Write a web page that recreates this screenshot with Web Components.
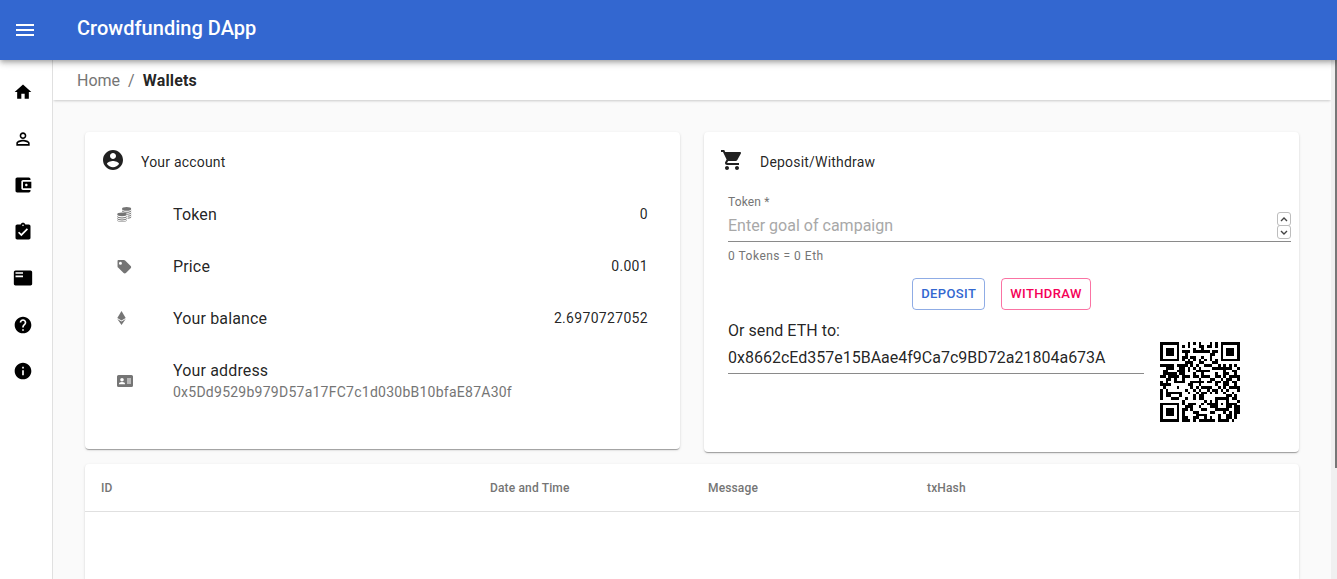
<!DOCTYPE html>
<html lang="en">
<head>
<meta charset="utf-8">
<title>Crowdfunding DApp</title>
<style>
html,body{margin:0;padding:0;height:100%;overflow:hidden;background:#fafafa;font-family:Roboto,"Liberation Sans",sans-serif;color:rgba(0,0,0,.87)}
</style>
</head>
<body>
<cd-app>
  <cd-appbar slot="bar">Crowdfunding DApp</cd-appbar>
  <cd-sidebar slot="side"></cd-sidebar>
  <cd-breadcrumb slot="crumb" home="Home" current="Wallets"></cd-breadcrumb>
  <cd-cards>
    <cd-card slot="left" icon="account" title="Your account" h="317">
      <cd-row icon="coins" label="Token" value="0"></cd-row>
      <cd-row icon="tag" label="Price" value="0.001"></cd-row>
      <cd-row icon="eth" label="Your balance" value="2.6970727052"></cd-row>
      <cd-row icon="idcard" label="Your address" sub="0x5Dd9529b979D57a17FC7c1d030bB10bfaE87A30f"></cd-row>
    </cd-card>
    <cd-card slot="right" icon="cart" title="Deposit/Withdraw" h="320">
      <cd-exchange address="0x8662cEd357e15BAae4f9Ca7c9BD72a21804a673A"></cd-exchange>
    </cd-card>
  </cd-cards>
  <cd-table></cd-table>
</cd-app>
<script>
const ICONS={
menu:'<path d="M3 18h18v-2H3v2zm0-5h18v-2H3v2zm0-7v2h18V6H3z"/>',
home:'<path d="M10 20v-6h4v6h5v-8h3L12 3 2 12h3v8z"/>',
person:'<path d="M12 5.9c1.16 0 2.1.94 2.1 2.1s-.94 2.1-2.1 2.1S9.9 9.16 9.9 8s.94-2.1 2.1-2.1m0 9c2.97 0 6.1 1.46 6.1 2.1v1.1H5.9V17c0-.64 3.13-2.1 6.1-2.1M12 4C9.79 4 8 5.79 8 8s1.79 4 4 4 4-1.79 4-4-1.79-4-4-4zm0 9c-2.67 0-8 1.34-8 4v3h16v-3c0-2.66-5.33-4-8-4z"/>',
wallet:'<path d="M21 18v1c0 1.1-.9 2-2 2H5c-1.11 0-2-.9-2-2V5c0-1.1.89-2 2-2h14c1.1 0 2 .9 2 2v1h-9c-1.11 0-2 .9-2 2v8c0 1.1.89 2 2 2h9zm-9-2h10V8H12v8zm4-2.5c-.83 0-1.5-.67-1.5-1.5s.67-1.5 1.5-1.5 1.5.67 1.5 1.5-.67 1.5-1.5 1.5z"/>',
assign:'<path d="M19 3h-4.18C14.4 1.84 13.3 1 12 1c-1.3 0-2.4.84-2.82 2H5c-1.1 0-2 .9-2 2v14c0 1.1.9 2 2 2h14c1.1 0 2-.9 2-2V5c0-1.1-.9-2-2-2zm-7 0c.55 0 1 .45 1 1s-.45 1-1 1-1-.45-1-1 .45-1 1-1zm-2 14l-4-4 1.41-1.41L10 14.17l6.59-6.59L18 9l-8 8z"/>',
list:'<path d="M21 3H3c-1.1 0-2 .9-2 2v14c0 1.1.9 2 2 2h18c1.1 0 2-.9 2-2V5c0-1.1-.9-2-2-2zm-9 8H3V9h9v2zm0-4H3V5h9v2z"/>',
help:'<path d="M12 2C6.48 2 2 6.48 2 12s4.48 10 10 10 10-4.48 10-10S17.52 2 12 2zm1 17h-2v-2h2v2zm2.07-7.75l-.9.92C13.45 12.9 13 13.5 13 15h-2v-.5c0-1.1.45-2.1 1.17-2.83l1.24-1.26c.37-.36.59-.86.59-1.41 0-1.1-.9-2-2-2s-2 .9-2 2H8c0-2.21 1.79-4 4-4s4 1.79 4 4c0 .88-.36 1.68-.93 2.25z"/>',
info:'<path d="M12 2C6.48 2 2 6.48 2 12s4.48 10 10 10 10-4.48 10-10S17.52 2 12 2zm1 15h-2v-6h2v6zm0-8h-2V7h2v2z"/>',
account:'<path d="M12 2C6.48 2 2 6.48 2 12s4.48 10 10 10 10-4.48 10-10S17.52 2 12 2zm0 3c1.66 0 3 1.34 3 3s-1.34 3-3 3-3-1.34-3-3 1.34-3 3-3zm0 14.2c-2.5 0-4.71-1.28-6-3.22.03-1.99 4-3.08 6-3.08 1.99 0 5.97 1.09 6 3.08-1.29 1.94-3.5 3.22-6 3.22z"/>',
cart:'<path d="M7 18c-1.1 0-1.99.9-1.99 2S5.9 22 7 22s2-.9 2-2-.9-2-2-2zM1 2v2h2l3.6 7.59-1.35 2.45c-.16.28-.25.61-.25.96 0 1.1.9 2 2 2h12v-2H7.42c-.14 0-.25-.11-.25-.25l.03-.12.9-1.63h7.45c.75 0 1.41-.41 1.75-1.03l3.58-6.49c.08-.14.12-.31.12-.48 0-.55-.45-1-1-1H5.21l-.94-2H1zm16 16c-1.1 0-1.99.9-1.99 2s.89 2 1.99 2 2-.9 2-2-.9-2-2-2z"/>',
coins:'<ellipse cx="5" cy="7.3" rx="4.8" ry="1.9"/><path d="M.2 8.4c0 1.1 2.1 2 4.8 2s4.8-.9 4.8-2v1c0 1.1-2.1 2-4.8 2s-4.8-.9-4.8-2z"/><path d="M.2 10.5c0 1.1 2.1 2 4.8 2s4.8-.9 4.8-2v1c0 1.1-2.1 2-4.8 2s-4.8-.9-4.8-2z"/><path d="M.2 12.6c0 1.1 2.1 2 4.8 2s4.8-.9 4.8-2v.6c0 .9-2.1 1.7-4.8 1.7s-4.8-.8-4.8-1.7z"/><ellipse cx="9.6" cy="1.9" rx="4.6" ry="1.8"/><path d="M5 2.9c0 1 2 1.8 4.6 1.8s4.6-.8 4.6-1.8v1c0 1-2 1.8-4.6 1.8S5 4.900 5 3.900z"/><path d="M5.800 6.200c1.100.3 2.400.5 3.800.5 2.600 0 4.600-.8 4.600-1.800v1c0 .9-1.700 1.700-3.900 1.800-.2-.5-1-1.200-4.500-1.500z"/><path d="M10.600 8.700c2-.2 3.600-.9 3.600-1.800v1c0 .9-1.500 1.600-3.600 1.800z"/><path d="M10.600 10.800c2-.2 3.600-.9 3.600-1.800v1c0 .9-1.500 1.600-3.600 1.800z"/>',
tag:'<path d="M.6 2v6.400c0 .5.2 1 .6 1.300l6.300 6.300c.7.7 1.900.7 2.600 0l5.400-5.400c.7-.7.7-1.900 0-2.600L9.200 1.700C8.900 1.300 8.400 1.100 7.900 1.100H1.500C1 1.100.6 1.500.6 2zm3.300 1.200a1.700 1.700 0 1 1 0 3.400 1.700 1.700 0 0 1 0-3.400z"/>',
eth:'<path d="M5 0L.2 8 5 10.900 9.800 8z"/><path d="M5 11.900L.2 9 5 16l4.800-7z"/>',
idcard:'<path fill-rule="evenodd" d="M1.500 0h13A1.500 1.500 0 0 1 16 1.500v9a1.500 1.500 0 0 1-1.500 1.500h-13A1.500 1.500 0 0 1 0 10.500v-9A1.500 1.500 0 0 1 1.500 0zM5 3a1.800 1.800 0 1 0 0 3.600A1.800 1.800 0 0 0 5 3zM2 9.300h6c.200-1.500-1.100-2.300-3-2.300s-3.200.8-3 2.300zM10 3.500v1h4v-1zM10 5.500v1h4v-1zM10 7.500v1h4v-1z"/>'
};
function def(name,css,render){
  customElements.define(name,class extends HTMLElement{
    connectedCallback(){
      if(this.shadowRoot)return;
      const r=this.attachShadow({mode:'open'});
      r.innerHTML='<style>'+css+'</style>'+render(this);
    }
  });
}
def('cd-icon',':host{display:inline-flex;flex:none;line-height:0}svg{display:block;fill:currentColor}',el=>{
  const n=el.getAttribute('name'),w=el.getAttribute('w')||24,h=el.getAttribute('h')||w,vb=el.getAttribute('vb')||'0 0 24 24';
  return `<svg xmlns="http://www.w3.org/2000/svg" width="${w}" height="${h}" viewBox="${vb}" aria-hidden="true">${ICONS[n]}</svg>`;
});
def('cd-app',`:host{display:flex;flex-direction:column;height:100vh;overflow:hidden}
.row{flex:1;min-height:0;display:flex}
main{flex:1;min-width:0;overflow:hidden;display:flex;flex-direction:column}
.content{flex:1;padding:32px 32px 0;display:flex;flex-direction:column;gap:12px;min-height:0}
.track{flex:none;width:6px;background:#f0f0f0;position:relative}
.thumb{position:absolute;right:0;top:0;width:2px;height:408px;background:#777}`,
()=>`<slot name="bar"></slot><div class="row"><slot name="side"></slot><main><slot name="crumb"></slot><div class="content"><slot></slot></div></main><div class="track"><div class="thumb"></div></div></div>`);
def('cd-appbar',`:host{display:flex;align-items:center;flex:none;height:60px;background:#3367d0;color:#fff;position:relative;z-index:3;box-shadow:0 2px 4px -1px rgba(0,0,0,.2),0 4px 5px 0 rgba(0,0,0,.14),0 1px 10px 0 rgba(0,0,0,.12)}
cd-icon{margin-left:13px}
.t{margin-left:40px;font:500 20px/32px Roboto,sans-serif;letter-spacing:.03px;position:relative;top:-2px}`,
()=>`<cd-icon name="menu"></cd-icon><span class="t"><slot></slot></span>`);
def('cd-sidebar',`:host{display:flex;flex-direction:column;flex:none;width:52px;border-right:1px solid #e0e0e0;background:#fff;padding-top:8.75px;color:#000}
div{height:46.5px;display:flex;align-items:center;padding-left:13px}`,
()=>['home','person','wallet','assign','list','help','info'].map(n=>`<div><cd-icon name="${n}" w="20"></cd-icon></div>`).join(''));
def('cd-breadcrumb',`:host{display:flex;flex:none;align-items:center;height:40px;box-sizing:border-box;padding:1px 0 0 24px;background:#fff;box-shadow:0 2px 2px -1px rgba(0,0,0,.12),0 1px 3px 0 rgba(0,0,0,.08);font:400 16px/24px Roboto,sans-serif;letter-spacing:.15px;position:relative;z-index:1}
a{color:#757575;letter-spacing:0}i{font-style:normal;color:#757575;margin:0 8px}b{font-weight:700;color:rgba(0,0,0,.87)}`,
el=>`<a>${el.getAttribute('home')}</a><i>/</i><b>${el.getAttribute('current')}</b>`);
def('cd-cards',`:host{display:grid;grid-template-columns:1fr 1fr;gap:24px;align-items:start;flex:none}`,
()=>`<slot name="left"></slot><slot name="right"></slot>`);
def('cd-card',`:host{display:block;background:#fff;border-radius:4px;box-shadow:0 2px 1px -1px rgba(0,0,0,.2),0 1px 1px 0 rgba(0,0,0,.14),0 1px 3px 0 rgba(0,0,0,.12);box-sizing:border-box}
header{display:flex;align-items:flex-start;padding:16px 16px 0;height:56px;box-sizing:border-box}
span{margin:4px 0 0 16px;font:400 14px/20px Roboto,sans-serif;letter-spacing:.2px}`,
el=>`<style>:host{height:${el.getAttribute('h')}px}</style><header><cd-icon name="${el.getAttribute('icon')}"></cd-icon><span>${el.getAttribute('title')}</span></header><slot></slot>`);
const RI={coins:[15,15,'0 0 15 15'],tag:[15,15,'0 0 17 17'],eth:[9,14,'0 0 10 16'],idcard:[16,12,'0 0 16 12']};
def('cd-row',`:host{display:flex;align-items:center;height:52px;padding:0 32px;font:400 16px/22px Roboto,sans-serif;letter-spacing:.15px}
:host([sub]){height:74px}
:host(:not([sub])) .tx{padding-top:2px}
.ic{width:56px;flex:none;color:#757575;display:flex}
.tx{flex:1;min-width:0}
.sub{font-size:14px;line-height:20px;color:#757575;letter-spacing:.25px}
.v{font-size:14px;letter-spacing:.32px}`,
el=>{const n=el.getAttribute('icon'),r=RI[n],s=el.getAttribute('sub'),v=el.getAttribute('value');
return `<div class="ic"><cd-icon name="${n}" w="${r[0]}" h="${r[1]}" vb="${r[2]}"></cd-icon></div><div class="tx"><div>${el.getAttribute('label')}</div>${s?`<div class="sub">${s}</div>`:''}</div>${v?`<div class="v">${v}</div>`:''}`});
def('cd-button',`:host{display:inline-flex;align-items:center;justify-content:center;height:32px;box-sizing:border-box;border:1px solid;border-radius:4px;padding:0 8px;font:500 13px/16px Roboto,sans-serif;letter-spacing:.38px;text-transform:uppercase}
:host([color=primary]){color:#3367d0;border-color:rgba(51,103,208,.55)}
:host([color=secondary]){color:#f50057;border-color:rgba(245,0,87,.55)}`,()=>`<slot></slot>`);
def('cd-field',`:host{display:block;margin:7px 8px 0 24px;position:relative}
label{display:block;font:400 12px/14px Roboto,sans-serif;letter-spacing:.15px;color:#757575}
.in{height:30px;padding-top:2px;border-bottom:1px solid #8a8a8a;display:flex;align-items:center;font:400 16px/20px Roboto,sans-serif;letter-spacing:.01px;color:#a8a8a8;justify-content:space-between}
.help{font:400 12px/14px Roboto,sans-serif;letter-spacing:.5px;color:#757575;margin-top:7px}
.spin{display:flex;flex-direction:column;align-self:flex-start;margin-top:1px}
.spin i{display:flex;align-items:center;justify-content:center;width:12px;height:12px;border:1px solid #bdbdbd;border-radius:3px;background:#fff;color:#444}
.spin i+i{margin-top:-1px}
svg{display:block}`,
()=>`<label>Token *</label><div class="in"><span>Enter goal of campaign</span><span class="spin"><i><svg width="8" height="5" viewBox="0 0 8 5"><path d="M1 4l3-3 3 3" fill="none" stroke="currentColor" stroke-width="1.400"/></svg></i><i><svg width="8" height="5" viewBox="0 0 8 5"><path d="M1 1l3 3 3-3" fill="none" stroke="currentColor" stroke-width="1.400"/></svg></i></span></div><div class="help">0 Tokens = 0 Eth</div>`);
def('cd-exchange',`:host{display:block}
.btns{display:flex;justify-content:center;gap:16px;margin-top:15px}
.send{display:grid;grid-template-columns:416px 80px;grid-template-rows:22px auto;column-gap:16px;margin:10px 0 0 24px;font:400 16px/22px Roboto,sans-serif;letter-spacing:.05px}
.lab{grid-column:1;grid-row:1}
.qr{grid-column:2;grid-row:1 / span 2;margin-top:22px}
.ad{grid-column:1;grid-row:2;height:22px;padding:5px 0 4px;border-bottom:1px solid #8a8a8a;align-self:start;letter-spacing:0}`,
el=>{const a=el.getAttribute('address');return `<cd-field></cd-field><div class="btns"><cd-button color="primary">Deposit</cd-button><cd-button color="secondary">Withdraw</cd-button></div>
<div class="send"><div class="lab">Or send ETH to:</div><div class="ad">${a}</div><cd-qr class="qr" data="${a}"></cd-qr></div>`});
def('cd-table',`:host{display:block;flex:1;background:#fff;border-radius:4px 4px 0 0;box-shadow:0 2px 1px -1px rgba(0,0,0,.2),0 1px 1px 0 rgba(0,0,0,.14),0 1px 3px 0 rgba(0,0,0,.12)}
.h{display:grid;grid-template-columns:389px 218px 219px 1fr;height:48px;box-sizing:border-box;border-bottom:1px solid #e0e0e0;font:500 12px/16px Roboto,sans-serif;color:#757575;align-items:center;letter-spacing:.15px}
.h div{padding-left:16px}`,
()=>`<div class="h"><div>ID</div><div>Date and Time</div><div>Message</div><div>txHash</div></div>`);
/* QR version 3, level L, mask 2 */
function qrMatrix(text,k){
  const N=29,nEC=15,nD=55,exp=[],log=[];let x=1;for(let i=0;i<255;i++){exp[i]=x;log[x]=i;x=(x<<1)^(x&128?0x11d:0);}
  const mul=(a,b)=>a&&b?exp[(log[a]+log[b])%255]:0;
  const bits=[];const put=(v,n)=>{for(let i=n-1;i>=0;i--)bits.push((v>>i)&1)};
  put(4,4);put(text.length,8);for(const c of text)put(c.charCodeAt(0),8);
  put(0,Math.min(4,nD*8-bits.length));while(bits.length%8)bits.push(0);
  const d=[];for(let i=0;i<bits.length;i+=8){d.push(parseInt(bits.slice(i,i+8).join(''),2))}
  for(let p=0xEC;d.length<nD;p^=0xEC^0x11)d.push(p);
  let g=[1];for(let i=0;i<nEC;i++){const n=new Array(g.length+1).fill(0);g.forEach((c,j)=>{n[j]^=c;n[j+1]^=mul(c,exp[i])});g=n}
  const ec=new Array(nEC).fill(0);
  for(const b of d){const f=b^ec.shift();ec.push(0);for(let i=0;i<nEC;i++)ec[i]^=mul(g[i+1],f)}
  const all=d.concat(ec);
  const m=[],fn=[];for(let i=0;i<N;i++){m.push(new Array(N).fill(0));fn.push(new Array(N).fill(false))}
  const set=(r,c,v)=>{if(r<0||c<0||r>=N||c>=N)return;m[r][c]=v?1:0;fn[r][c]=true};
  const finder=(r,c)=>{for(let i=-1;i<=7;i++)for(let j=-1;j<=7;j++){const e=Math.max(Math.abs(i-3),Math.abs(j-3));set(r+i,c+j,e!==2&&e!==4)}};
  finder(0,0);finder(0,22);finder(22,0);
  for(let i=0;i<N;i++){if(!fn[6][i])set(6,i,i%2==0);if(!fn[i][6])set(i,6,i%2==0)}
  for(let i=-2;i<=2;i++)for(let j=-2;j<=2;j++)set(22+i,22+j,Math.max(Math.abs(i),Math.abs(j))!==1);
  let dt=(1<<3)|k,rem=dt;for(let i=0;i<10;i++)rem=(rem<<1)^((rem>>9)*0x537);const b=((dt<<10)|rem)^0x5412;const f=i=>(b>>i)&1;
  for(let i=0;i<=5;i++)set(i,8,f(i));set(7,8,f(6));set(8,8,f(7));set(8,7,f(8));for(let i=9;i<15;i++)set(8,14-i,f(i));
  for(let i=0;i<8;i++)set(8,N-1-i,f(i));for(let i=8;i<15;i++)set(N-15+i,8,f(i));set(N-8,8,1);
  let bi=0;const cw=[];for(const v of all)for(let i=7;i>=0;i--)cw.push((v>>i)&1);
  for(let c=N-1;c>=1;c-=2){if(c===6)c=5;for(let v=0;v<N;v++){for(let j=0;j<2;j++){const cc=c-j,up=((c+1)&2)===0,r=up?N-1-v:v;if(!fn[r][cc]){m[r][cc]=(bi<cw.length?cw[bi++]:0)^(cc%3===0?1:0)}}}}
  return m;
}
def('cd-qr',`:host{display:block;width:80px;height:80px}svg{display:block}`,el=>{
  const a=qrMatrix(el.getAttribute('data'),2);let d='';
  a.forEach((q,r)=>q.forEach((v,c)=>{if(v)d+=`M${c} ${r}h1v1h-1z`}));
  return `<svg xmlns="http://www.w3.org/2000/svg" width="80" height="80" viewBox="0 0 29 29" shape-rendering="crispEdges"><path fill="#000" d="${d}"/></svg>`});
</script>
</body>
</html>
